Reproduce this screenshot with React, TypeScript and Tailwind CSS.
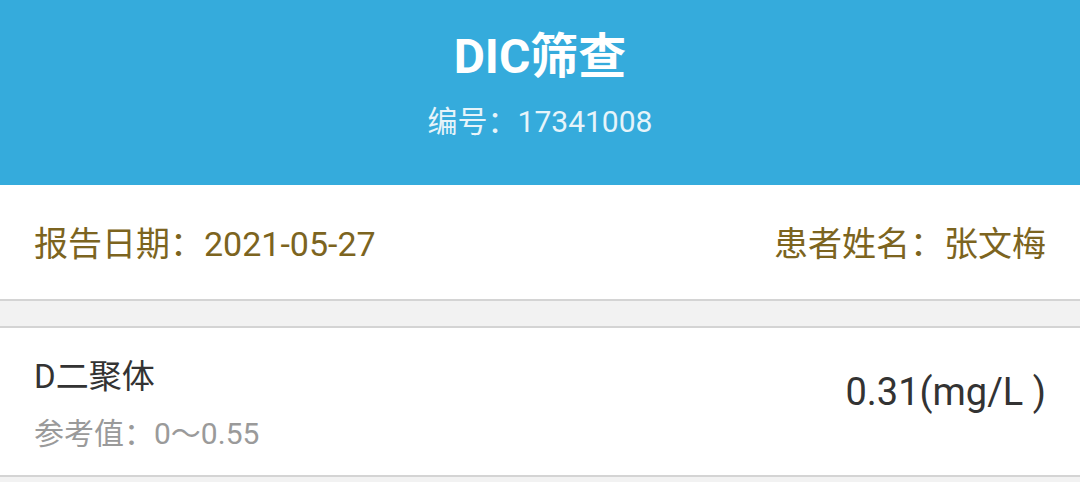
export default function App() {
  const font = { fontFamily: 'Roboto, "Noto Sans CJK SC", sans-serif' };
  return (
    <div className="min-h-[482px] w-[1080px] bg-[#f2f2f2]" style={font}>
      {/* header */}
      <div className="h-[185px] bg-[#35abdc] flex flex-col items-center text-white">
        <div className="mt-[29px] text-[48px] leading-[56px] font-bold">DIC筛查</div>
        <div className="mt-[17px] text-[30px] leading-[40px] text-[#e6f4fa]">编号：17341008</div>
      </div>

      {/* patient info */}
      <div className="h-[116px] bg-white border-b-2 border-[#d4d4d4] flex items-center justify-between px-[34px] pt-[4px] text-[34px] text-[#7c6420]">
        <span>报告日期：2021-05-27</span>
        <span>患者姓名：张文梅</span>
      </div>

      <div className="h-[27px] bg-[#f2f2f2] border-b-2 border-[#d4d4d4]" />

      {/* result row */}
      <div className="h-[149px] bg-white border-b-2 border-[#d4d4d4] flex items-start justify-between px-[34px]">
        <div className="flex flex-col pt-[28px]">
          <span className="text-[33px] leading-[42px] text-[#333]">D二聚体</span>
          <span className="mt-[17px] text-[30px] leading-[38px] text-[#9a9a9a]">参考值：0～0.55</span>
        </div>
        <span className="pt-[41px] text-[38px] leading-[46px] text-[#333]">0.31(mg/L )</span>
      </div>
    </div>
  );
}
